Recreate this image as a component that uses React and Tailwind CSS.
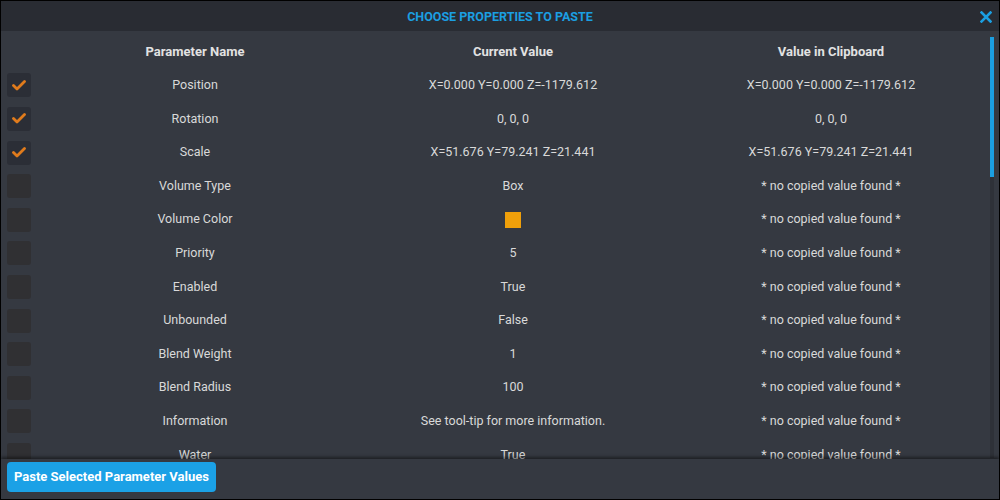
import React, { useState } from 'react';

// ── rows shown in the paste dialog ────────────────────────────────────────────
const NONE = '* no copied value found *';
const ROWS = [
  { name: 'Position',     current: 'X=0.000 Y=0.000 Z=-1179.612',  clip: 'X=0.000 Y=0.000 Z=-1179.612',  checked: true },
  { name: 'Rotation',     current: '0, 0, 0',                      clip: '0, 0, 0',                      checked: true },
  { name: 'Scale',        current: 'X=51.676 Y=79.241 Z=21.441',   clip: 'X=51.676 Y=79.241 Z=21.441',   checked: true },
  { name: 'Volume Type',  current: 'Box',                          clip: NONE },
  { name: 'Volume Color', current: 'swatch',                       clip: NONE },
  { name: 'Priority',     current: '5',                            clip: NONE },
  { name: 'Enabled',      current: 'True',                         clip: NONE },
  { name: 'Unbounded',    current: 'False',                        clip: NONE },
  { name: 'Blend Weight', current: '1',                            clip: NONE },
  { name: 'Blend Radius', current: '100',                          clip: NONE },
  { name: 'Information',  current: 'See tool-tip for more information.', clip: NONE },
  { name: 'Water',        current: 'True',                         clip: NONE },
  { name: 'Fog',          current: 'False',                        clip: NONE },
];

function CheckBox({ checked, onToggle }) {
  return (
    <button onClick={onToggle}
      className={`w-6 h-6 rounded-[3px] flex items-center justify-center ${checked ? 'bg-[#2b2e36]' : 'bg-[#303033]'}`}>
      {checked && (
        <svg width="14" height="11" viewBox="0 0 14 11">
          <path d="M1.5 5.5 L5 9 L12.5 1.5" fill="none" stroke="#e07b1c" strokeWidth="2.8" strokeLinecap="round" strokeLinejoin="round" />
        </svg>
      )}
    </button>
  );
}

export default function App() {
  const [rows, setRows] = useState(ROWS);

  function toggle(i) {
    setRows(r => r.map((row, j) => (j === i ? { ...row, checked: !row.checked } : row)));
  }

  return (
    <div className="w-[1000px] h-[500px] border border-black bg-[#353941] flex flex-col overflow-hidden text-[12.5px] text-[#d9d9d9]"
      style={{ fontFamily: 'Roboto, "Liberation Sans", sans-serif' }}>
      {/* title bar */}
      <div className="h-[30px] flex-none bg-[#292c33] flex items-center relative z-10">
        <h1 className="w-full text-center font-bold text-[#1b9fe2] pt-[2px]">CHOOSE PROPERTIES TO PASTE</h1>
        <button className="absolute right-[7px] top-[10px]">
          <svg width="12" height="12" viewBox="0 0 12 12">
            <path d="M1.5 1.5 L10.5 10.5 M10.5 1.5 L1.5 10.5" stroke="#1b9fe2" strokeWidth="2.6" strokeLinecap="square" />
          </svg>
        </button>
      </div>

      {/* table + scrollbar */}
      <div className="flex-1 flex min-h-0">
        <div className="flex-1 overflow-hidden pt-[4px]">
          <div className="grid grid-cols-[35px_318px_318px_318px] h-[33.6px] items-center font-bold text-[13px] text-[#e2e2e2]">
            <span />
            <span className="text-center">Parameter Name</span>
            <span className="text-center">Current Value</span>
            <span className="text-center">Value in Clipboard</span>
          </div>
          {rows.map((row, i) => (
            <div key={row.name} className="grid grid-cols-[35px_318px_318px_318px] h-[33.6px] items-center">
              <div className="flex justify-end pr-[5px]">
                <CheckBox checked={row.checked} onToggle={() => toggle(i)} />
              </div>
              <span className="text-center">{row.name}</span>
              <span className="flex justify-center">
                {row.current === 'swatch'
                  ? <span className="w-4 h-4 bg-[#f0a00a]" />
                  : row.current}
              </span>
              <span className="text-center">{row.clip}</span>
            </div>
          ))}
        </div>
        <div className="w-1 mr-[5px] mt-[6px] mb-[1px] bg-[#2e3138] flex flex-col">
          <div className="h-[140px] bg-[#1b9fe2]" />
        </div>
      </div>

      {/* footer */}
      <div className="h-[40px] flex-none flex items-start pt-[3px] pl-[6px] shadow-[0_-2px_3px_rgba(0,0,0,0.45)] relative bg-[#353941]">
        <button className="h-[30px] px-[7px] rounded-[4px] bg-[#1ba1e6] text-white font-bold text-[13px]">
          Paste Selected Parameter Values
        </button>
      </div>
    </div>
  );
}
